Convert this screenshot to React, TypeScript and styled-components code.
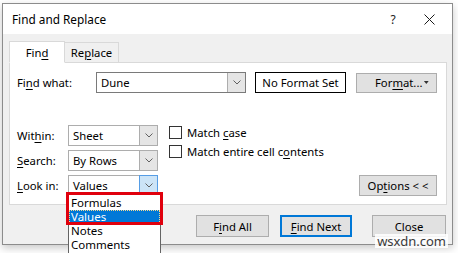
import React from "react";
import styled, { createGlobalStyle, css } from "styled-components";

const Global = createGlobalStyle`
  html, body { margin: 0; padding: 0; background: #ffffff; }
  body { font-family: "Noto Sans", "Open Sans", sans-serif; font-size: 11.3px; color: #000; }
  #root { width: 458px; height: 253px; overflow: hidden; position: relative; }
`;

const Dialog = styled.div`
  position: relative;
  margin: 3px 0 0 2px;
  width: 451px;
  height: 242px;
  box-sizing: border-box;
  border: 1px solid #8c8c8c;
  background: #f0f0f0;
  box-shadow: 0 3px 8px rgba(0, 0, 0, 0.22);
  display: flex;
  flex-direction: column;
`;

const TitleBar = styled.div`
  height: 30px;
  flex: none;
  background: #ffffff;
  display: flex;
  align-items: center;
  padding-left: 9px;
`;

const Title = styled.div`
  flex: 1;
  font-size: 11.8px;
`;

const TitleButton = styled.div<{ $w: number }>`
  width: ${(p) => p.$w}px;
  height: 30px;
  display: flex;
  align-items: center;
  justify-content: center;
  color: #1a1a1a;
  font-size: 12px;
`;

const Body = styled.div`
  flex: 1;
  padding: 7px 0 0 6px;
  display: flex;
  flex-direction: column;
`;

const Tabs = styled.div`
  display: flex;
  align-items: flex-end;
  height: 22px;
  position: relative;
  z-index: 2;
`;

const Tab = styled.div<{ $active?: boolean; $w: number }>`
  width: ${(p) => p.$w}px;
  box-sizing: border-box;
  display: flex;
  align-items: center;
  justify-content: center;
  border: 1px solid #d9d9d9;
  ${(p) =>
    p.$active
      ? css`
          height: 22px;
          background: #ffffff;
          border-bottom: 1px solid #ffffff;
        `
      : css`
          height: 20px;
          background: #f0f0f0;
          border-left: none;
          margin-bottom: 1px;
          border-bottom: none;
        `}
`;

const Panel = styled.div`
  width: 438px;
  height: 143px;
  box-sizing: border-box;
  margin-top: -1px;
  background: #ffffff;
  border: 1px solid #d9d9d9;
  padding: 9px 0 0 7px;
  display: flex;
  flex-direction: column;
`;

const Row = styled.div`
  display: flex;
  align-items: center;
`;

const Label = styled.div<{ $w: number }>`
  width: ${(p) => p.$w}px;
  flex: none;
`;

const U = styled.span`
  text-decoration: underline;
  text-underline-offset: 2px;
`;

const Combo = styled.div<{ $w: number; $h: number; $dark?: boolean }>`
  width: ${(p) => p.$w}px;
  height: ${(p) => p.$h}px;
  box-sizing: border-box;
  border: 1px solid ${(p) => (p.$dark ? "#7a7a7a" : "#adadad")};
  background: #fff;
  display: flex;
  align-items: stretch;
  flex: none;
`;

const ComboText = styled.div`
  flex: 1;
  padding-left: 4px;
  display: flex;
  align-items: center;
`;

const ArrowBox = styled.div<{ $hot?: boolean }>`
  width: 18px;
  flex: none;
  display: flex;
  align-items: center;
  justify-content: center;
  box-sizing: border-box;
  ${(p) =>
    p.$hot
      ? css`
          background: #cce4f7;
          border: 1px solid #569de5;
          margin: -1px -1px -1px 0;
          width: 19px;
        `
      : css`
          background: #e5e5e5;
          border-left: 1px solid #adadad;
        `}
`;

const Chevron = () => (
  <svg width="8" height="5" viewBox="0 0 8 5">
    <path d="M0.5 0.5 L4 4 L7.5 0.5" fill="none" stroke="#606060" strokeWidth="1" />
  </svg>
);

const FormatBox = styled.div`
  width: 91px;
  height: 21px;
  box-sizing: border-box;
  border: 1px solid #000;
  margin-left: 9px;
  display: flex;
  align-items: center;
  justify-content: center;
`;

const Button = styled.div<{ $w: number; $h?: number; $default?: boolean }>`
  width: ${(p) => p.$w}px;
  height: ${(p) => p.$h ?? 22}px;
  box-sizing: border-box;
  background: #e1e1e1;
  border: ${(p) => (p.$default ? "2px solid #0078d7" : "1px solid #adadad")};
  display: flex;
  align-items: center;
  justify-content: center;
  flex: none;
`;

const MenuButton = styled(Button)`
  margin-left: 10px;
  justify-content: space-between;
  padding: 0 3px 0 18px;
`;

const Lower = styled.div`
  margin-top: 32px;
  display: flex;
  align-items: flex-start;
`;

const LeftCol = styled.div`
  display: flex;
  flex-direction: column;
  gap: 4px;
  position: relative;
`;

const MidCol = styled.div`
  margin-left: 11px;
  margin-top: 1px;
  display: flex;
  flex-direction: column;
  gap: 6px;
`;

const CheckRow = styled.div`
  display: flex;
  align-items: center;
  gap: 5px;
  height: 13px;
`;

const Box = styled.div`
  width: 13px;
  height: 13px;
  box-sizing: border-box;
  border: 1px solid #333;
  background: #fff;
`;

const RightCol = styled.div`
  margin-left: auto;
  margin-right: 9px;
  align-self: flex-end;
`;

const DropList = styled.div`
  position: absolute;
  left: 51px;
  top: 69px;
  width: 93px;
  box-sizing: border-box;
  background: #fff;
  border: 1px solid #646464;
  padding: 1px 0 2px;
  z-index: 5;
  font-size: 11.5px;
`;

const DropItem = styled.div<{ $sel?: boolean }>`
  height: 14px;
  line-height: 14px;
  padding-left: 2px;
  box-sizing: border-box;
  ${(p) =>
    p.$sel &&
    css`
      background: #0078d7;
      color: #fff;
      outline: 1px dotted #f5d78e;
      outline-offset: -1px;
    `}
`;

const Highlight = styled.div`
  position: absolute;
  left: 49px;
  top: 67px;
  width: 97px;
  height: 33px;
  box-sizing: border-box;
  border: 3px solid #e0000d;
  z-index: 6;
  pointer-events: none;
`;

const Footer = styled.div`
  display: flex;
  justify-content: flex-end;
  padding: 10px 6px 0 0;
`;

const FooterButton = styled(Button)<{ $gap?: number }>`
  margin-left: ${(p) => p.$gap ?? 0}px;
`;

const Watermark = styled.div`
  position: absolute;
  right: 4px;
  bottom: -4px;
  padding: 0 2px;
  font-size: 13px;
  line-height: 14px;
  color: #3a3a3a;
  background: rgba(255, 255, 255, 0.85);
  z-index: 10;
`;

export default function App() {
  return (
    <>
      <Global />
      <Dialog>
        <TitleBar>
          <Title>Find and Replace</Title>
          <TitleButton $w={26}>?</TitleButton>
          <TitleButton $w={46}>
            <svg width="11" height="11" viewBox="0 0 11 11">
              <path d="M0.5 0.5 L10.5 10.5 M10.5 0.5 L0.5 10.5" stroke="#1a1a1a" strokeWidth="1" />
            </svg>
          </TitleButton>
        </TitleBar>
        <Body>
          <Tabs>
            <Tab $active $w={56}>
              Fin<U>d</U>
            </Tab>
            <Tab $w={54}>
              Re<U>p</U>lace
            </Tab>
          </Tabs>
          <Panel>
            <Row>
              <Label $w={79}>
                Fi<U>n</U>d what:
              </Label>
              <Combo $w={150} $h={21} $dark>
                <ComboText>Dune</ComboText>
                <ArrowBox>
                  <Chevron />
                </ArrowBox>
              </Combo>
              <FormatBox>No Format Set</FormatBox>
              <MenuButton $w={81} $h={20}>
                <span>
                  For<U>m</U>at...
                </span>
                <svg width="11" height="4" viewBox="0 0 11 4">
                  <path d="M2 0 L7 0 L4.5 3 Z" fill="#333" />
                </svg>
              </MenuButton>
            </Row>
            <Lower>
              <LeftCol>
                <Row>
                  <Label $w={51}>
                    Wit<U>h</U>in:
                  </Label>
                  <Combo $w={90} $h={21}>
                    <ComboText>Sheet</ComboText>
                    <ArrowBox>
                      <Chevron />
                    </ArrowBox>
                  </Combo>
                </Row>
                <Row>
                  <Label $w={51}>
                    <U>S</U>earch:
                  </Label>
                  <Combo $w={90} $h={21}>
                    <ComboText>By Rows</ComboText>
                    <ArrowBox>
                      <Chevron />
                    </ArrowBox>
                  </Combo>
                </Row>
                <Row>
                  <Label $w={51}>
                    <U>L</U>ook in:
                  </Label>
                  <Combo $w={90} $h={21}>
                    <ComboText>Values</ComboText>
                    <ArrowBox $hot>
                      <Chevron />
                    </ArrowBox>
                  </Combo>
                </Row>
                <DropList>
                  <DropItem>Formulas</DropItem>
                  <DropItem $sel>Values</DropItem>
                  <DropItem>Notes</DropItem>
                  <DropItem>Comments</DropItem>
                </DropList>
                <Highlight />
              </LeftCol>
              <MidCol>
                <CheckRow>
                  <Box />
                  <span>
                    Match <U>c</U>ase
                  </span>
                </CheckRow>
                <CheckRow>
                  <Box />
                  <span>
                    Match entire cell c<U>o</U>ntents
                  </span>
                </CheckRow>
              </MidCol>
              <RightCol>
                <Button $w={78} $h={21}>
                  <span>
                    Op<U>t</U>ions &lt; &lt;
                  </span>
                </Button>
              </RightCol>
            </Lower>
          </Panel>
          <Footer>
            <FooterButton $w={73}>
              <span>
                F<U>i</U>nd All
              </span>
            </FooterButton>
            <FooterButton $w={72} $gap={11} $default>
              <span>
                <U>F</U>ind Next
              </span>
            </FooterButton>
            <FooterButton $w={74} $gap={20}>
              Close
            </FooterButton>
          </Footer>
        </Body>
        <Watermark>wsxdn.com</Watermark>
      </Dialog>
    </>
  );
}
